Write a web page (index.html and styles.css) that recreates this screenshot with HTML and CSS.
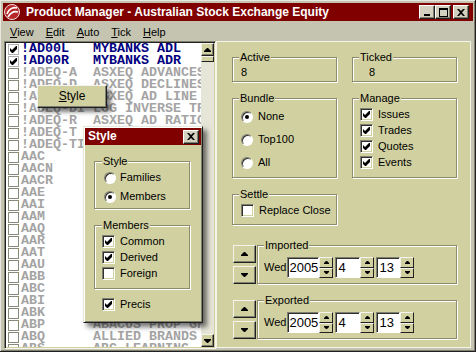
FILE: index.html
```html
<!DOCTYPE html>
<html lang="en">
<head>
<meta charset="UTF-8">
<title>Product Manager</title>
<link rel="stylesheet" href="styles.css">
</head>
<body>
<div class="window">
    <div class="titlebar">
        <svg class="app-icon" width="16" height="16" viewBox="0 0 16 16">
            <circle cx="8" cy="8" r="7.5" fill="#b82828" stroke="#f0e0e0"/>
            <path d="M3 10 C5 4, 10 3, 13 4" fill="none" stroke="#fff" stroke-width="1.6"/>
            <path d="M4 13 C7 8, 11 7, 14 8" fill="none" stroke="#fff" stroke-width="1.6"/>
        </svg>
        <span class="title">Product Manager - Australian Stock Exchange Equity</span>
        <div class="caption-buttons">
            <span class="cap-btn"><svg width="8" height="8" viewBox="0 0 8 8"><rect x="1" y="6" width="6" height="2"/></svg></span>
            <span class="cap-btn"><svg width="9" height="9" viewBox="0 0 9 9"><path d="M0 0h9v9H0z M1 2v6h7V2z" fill-rule="evenodd"/></svg></span>
            <span class="cap-btn close"><svg width="8" height="7" viewBox="0 0 8 7"><path d="M0 0h2l2 2 2-2h2L5 3.5 8 7H6L4 5 2 7H0l3-3.5z"/></svg></span>
        </div>
    </div>

    <div class="menubar">
        <span class="menu-item"><u>V</u>iew</span>
        <span class="menu-item"><u>E</u>dit</span>
        <span class="menu-item"><u>A</u>uto</span>
        <span class="menu-item"><u>T</u>ick</span>
        <span class="menu-item"><u>H</u>elp</span>
    </div>

    <div class="client">
        <div class="listbox">
            <div class="rows">
                <div class="row on"><span class="tick"><svg width="7" height="7" viewBox="0 0 7 7"><polygon points="0,2 2,4 6,0 7,0 7,3 3,7 2,7 0,5"/></svg></span><span class="code">!AD00L</span><span class="name">MYBANKS ADL</span></div>
                <div class="row on"><span class="tick"><svg width="7" height="7" viewBox="0 0 7 7"><polygon points="0,2 2,4 6,0 7,0 7,3 3,7 2,7 0,5"/></svg></span><span class="code">!AD00R</span><span class="name">MYBANKS ADR</span></div>
                <div class="row"><span class="tick"></span><span class="code">!ADEQ-A</span><span class="name">ASXEQ ADVANCES</span></div>
                <div class="row"><span class="tick"></span><span class="code">!ADEQ-D</span><span class="name">ASXEQ DECLINES</span></div>
                <div class="row"><span class="tick"></span><span class="code">!ADEQ-L</span><span class="name">ASXEQ AD LINE</span></div>
                <div class="row"><span class="tick"></span><span class="code">!ADEQ-DI</span><span class="name">LOG INVERSE TR</span></div>
                <div class="row"><span class="tick"></span><span class="code">!ADEQ-R</span><span class="name">ASXEQ AD RATIO</span></div>
                <div class="row"><span class="tick"></span><span class="code">!ADEQ-T</span><span class="name">ASXEQ TRIN</span></div>
                <div class="row"><span class="tick"></span><span class="code">!ADEQ-TI</span><span class="name">ASXEQ TRIN INV</span></div>
                <div class="row"><span class="tick"></span><span class="code">AAC</span><span class="name">AUST AGRICULT</span></div>
                <div class="row"><span class="tick"></span><span class="code">AACN</span><span class="name">AUST AGRIC NEW</span></div>
                <div class="row"><span class="tick"></span><span class="code">AACR</span><span class="name">AUST AGRIC RTS</span></div>
                <div class="row"><span class="tick"></span><span class="code">AAE</span><span class="name">AGRI ENERGY</span></div>
                <div class="row"><span class="tick"></span><span class="code">AAI</span><span class="name">ALCOA INC</span></div>
                <div class="row"><span class="tick"></span><span class="code">AAM</span><span class="name">AUST ALLIANCE</span></div>
                <div class="row"><span class="tick"></span><span class="code">AAQ</span><span class="name">AQUACARB CORP</span></div>
                <div class="row"><span class="tick"></span><span class="code">AAR</span><span class="name">ANGLO AUST RES</span></div>
                <div class="row"><span class="tick"></span><span class="code">AAT</span><span class="name">ASIA ATLANTIC</span></div>
                <div class="row"><span class="tick"></span><span class="code">AAU</span><span class="name">AUST AUSTRAL</span></div>
                <div class="row"><span class="tick"></span><span class="code">ABB</span><span class="name">ABB GRAIN</span></div>
                <div class="row"><span class="tick"></span><span class="code">ABC</span><span class="name">ADEL BRIGHTON</span></div>
                <div class="row"><span class="tick"></span><span class="code">ABI</span><span class="name">ABIGROUP</span></div>
                <div class="row"><span class="tick"></span><span class="code">ABK</span><span class="name">ABACUS FUNDS</span></div>
                <div class="row"><span class="tick"></span><span class="code">ABP</span><span class="name">ABACUS PROP GR</span></div>
                <div class="row"><span class="tick"></span><span class="code">ABQ</span><span class="name">ALLIED BRANDS</span></div>
                <div class="row"><span class="tick"></span><span class="code">ABS</span><span class="name">ABC LEARNING</span></div>
            </div>
            <div class="vscroll">
                <span class="sb-btn"><svg width="7" height="4" viewBox="0 0 7 4"><polygon points="3,0 4,0 7,3 7,4 0,4 0,3"/></svg></span>
                <span class="sb-thumb"></span>
                <span class="sb-track"></span>
                <span class="sb-btn"><svg width="7" height="4" viewBox="0 0 7 4"><polygon points="0,0 7,0 7,1 4,4 3,4 0,1"/></svg></span>
            </div>
        </div>

        <div class="panel">
            <div class="groups">
                <fieldset class="group">
                    <legend>Active</legend>
                    <div class="value">8</div>
                </fieldset>
                <fieldset class="group">
                    <legend>Ticked</legend>
                    <div class="value indent">8</div>
                </fieldset>
                <fieldset class="group">
                    <legend>Bundle</legend>
                    <label class="opt radio-row"><span class="radio checked"></span>None</label>
                    <label class="opt radio-row"><span class="radio"></span>Top100</label>
                    <label class="opt radio-row"><span class="radio"></span>All</label>
                </fieldset>
                <fieldset class="group manage">
                    <legend>Manage</legend>
                    <label class="opt check-row"><span class="check"><svg width="7" height="7" viewBox="0 0 7 7"><polygon points="0,2 2,4 6,0 7,0 7,3 3,7 2,7 0,5"/></svg></span>Issues</label>
                    <label class="opt check-row"><span class="check"><svg width="7" height="7" viewBox="0 0 7 7"><polygon points="0,2 2,4 6,0 7,0 7,3 3,7 2,7 0,5"/></svg></span>Trades</label>
                    <label class="opt check-row"><span class="check"><svg width="7" height="7" viewBox="0 0 7 7"><polygon points="0,2 2,4 6,0 7,0 7,3 3,7 2,7 0,5"/></svg></span>Quotes</label>
                    <label class="opt check-row"><span class="check"><svg width="7" height="7" viewBox="0 0 7 7"><polygon points="0,2 2,4 6,0 7,0 7,3 3,7 2,7 0,5"/></svg></span>Events</label>
                </fieldset>
                <fieldset class="group settle">
                    <legend>Settle</legend>
                    <label class="opt"><span class="check"></span>Replace Close</label>
                </fieldset>
            </div>

            <div class="date-row first">
                <div class="big-spin">
                    <span class="big-btn"><svg width="7" height="4" viewBox="0 0 7 4"><polygon points="3,0 4,0 7,3 7,4 0,4 0,3"/></svg></span>
                    <span class="big-btn"><svg width="7" height="4" viewBox="0 0 7 4"><polygon points="0,0 7,0 7,1 4,4 3,4 0,1"/></svg></span>
                </div>
                <fieldset class="group date">
                    <legend>Imported</legend>
                    <div class="date-fields">
                        <span class="dow">Wed</span>
                        <span class="edit year">2005</span>
                        <span class="spin"><span class="spin-btn"><svg width="5" height="3" viewBox="0 0 5 3"><polygon points="2,0 3,0 5,2 5,3 0,3 0,2"/></svg></span><span class="spin-btn"><svg width="5" height="3" viewBox="0 0 5 3"><polygon points="0,0 5,0 5,1 3,3 2,3 0,1"/></svg></span></span>
                        <span class="edit month">4</span>
                        <span class="spin"><span class="spin-btn"><svg width="5" height="3" viewBox="0 0 5 3"><polygon points="2,0 3,0 5,2 5,3 0,3 0,2"/></svg></span><span class="spin-btn"><svg width="5" height="3" viewBox="0 0 5 3"><polygon points="0,0 5,0 5,1 3,3 2,3 0,1"/></svg></span></span>
                        <span class="edit day">13</span>
                        <span class="spin"><span class="spin-btn"><svg width="5" height="3" viewBox="0 0 5 3"><polygon points="2,0 3,0 5,2 5,3 0,3 0,2"/></svg></span><span class="spin-btn"><svg width="5" height="3" viewBox="0 0 5 3"><polygon points="0,0 5,0 5,1 3,3 2,3 0,1"/></svg></span></span>
                    </div>
                </fieldset>
            </div>

            <div class="date-row">
                <div class="big-spin">
                    <span class="big-btn"><svg width="7" height="4" viewBox="0 0 7 4"><polygon points="3,0 4,0 7,3 7,4 0,4 0,3"/></svg></span>
                    <span class="big-btn"><svg width="7" height="4" viewBox="0 0 7 4"><polygon points="0,0 7,0 7,1 4,4 3,4 0,1"/></svg></span>
                </div>
                <fieldset class="group date">
                    <legend>Exported</legend>
                    <div class="date-fields">
                        <span class="dow">Wed</span>
                        <span class="edit year">2005</span>
                        <span class="spin"><span class="spin-btn"><svg width="5" height="3" viewBox="0 0 5 3"><polygon points="2,0 3,0 5,2 5,3 0,3 0,2"/></svg></span><span class="spin-btn"><svg width="5" height="3" viewBox="0 0 5 3"><polygon points="0,0 5,0 5,1 3,3 2,3 0,1"/></svg></span></span>
                        <span class="edit month">4</span>
                        <span class="spin"><span class="spin-btn"><svg width="5" height="3" viewBox="0 0 5 3"><polygon points="2,0 3,0 5,2 5,3 0,3 0,2"/></svg></span><span class="spin-btn"><svg width="5" height="3" viewBox="0 0 5 3"><polygon points="0,0 5,0 5,1 3,3 2,3 0,1"/></svg></span></span>
                        <span class="edit day">13</span>
                        <span class="spin"><span class="spin-btn"><svg width="5" height="3" viewBox="0 0 5 3"><polygon points="2,0 3,0 5,2 5,3 0,3 0,2"/></svg></span><span class="spin-btn"><svg width="5" height="3" viewBox="0 0 5 3"><polygon points="0,0 5,0 5,1 3,3 2,3 0,1"/></svg></span></span>
                    </div>
                </fieldset>
            </div>
        </div>
    </div>

    <!-- context menu over the list -->
    <div class="popup-menu"><span><u>S</u>tyle</span></div>

    <!-- Style tool window -->
    <div class="dialog">
        <div class="dlg-title">
            <span>Style</span>
            <span class="cap-btn close"><svg width="8" height="7" viewBox="0 0 8 7"><path d="M0 0h2l2 2 2-2h2L5 3.5 8 7H6L4 5 2 7H0l3-3.5z"/></svg></span>
        </div>
        <div class="dlg-body">
            <fieldset class="group style-group">
                <legend>Style</legend>
                <label class="opt dlg-radio"><span class="radio"></span>Families</label>
                <label class="opt dlg-radio"><span class="radio checked"></span>Members</label>
            </fieldset>
            <fieldset class="group members-group">
                <legend>Members</legend>
                <label class="opt check-row"><span class="check"><svg width="7" height="7" viewBox="0 0 7 7"><polygon points="0,2 2,4 6,0 7,0 7,3 3,7 2,7 0,5"/></svg></span>Common</label>
                <label class="opt check-row"><span class="check"><svg width="7" height="7" viewBox="0 0 7 7"><polygon points="0,2 2,4 6,0 7,0 7,3 3,7 2,7 0,5"/></svg></span>Derived</label>
                <label class="opt check-row"><span class="check"></span>Foreign</label>
            </fieldset>
            <label class="opt precis"><span class="check"><svg width="7" height="7" viewBox="0 0 7 7"><polygon points="0,2 2,4 6,0 7,0 7,3 3,7 2,7 0,5"/></svg></span>Precis</label>
        </div>
    </div>
</div>
</body>
</html>
```

FILE: styles.css
```css
body {
    margin: 0;
    background-color: #c4c4b0;
    font-family: "Liberation Sans", Arial, sans-serif;
    font-size: 11px;
    line-height: 13px;
    color: #000;
}

.window {
    position: relative;
    width: 476px;
    height: 352px;
    box-sizing: border-box;
    padding: 3px;
    background-color: #c4c4b0;
    box-shadow: inset -1px -1px #202020, inset 1px 1px #e8e8e0, inset -2px -2px #808070;
    display: flex;
    flex-direction: column;
    overflow: hidden;
}

/* title bar */
.titlebar {
    height: 18px;
    background-color: #800000;
    display: flex;
    align-items: center;
    padding: 0 4px 0 1px;
    flex-shrink: 0;
}

.app-icon {
    margin-right: 6px;
}

.title {
    color: #fff;
    font-weight: bold;
    font-size: 12px;
    white-space: nowrap;
}

.caption-buttons {
    margin-left: auto;
    display: flex;
}

.cap-btn {
    width: 16px;
    height: 14px;
    box-sizing: border-box;
    background-color: #d4d0c0;
    border: 1px solid;
    border-color: #fff #202020 #202020 #fff;
    box-shadow: inset -1px -1px #808070;
    display: flex;
    align-items: center;
    justify-content: center;
}

.cap-btn.close {
    margin-left: 2px;
}

/* menu bar */
.menubar {
    height: 20px;
    display: flex;
    align-items: center;
    padding: 2px 0 0 1px;
    box-sizing: border-box;
    flex-shrink: 0;
}

.menu-item {
    padding: 0 6px;
}

/* client area */
.client {
    flex: 1;
    display: flex;
    padding: 0 2px 0 1px;
    min-height: 0;
}

.listbox {
    width: 212px;
    box-sizing: border-box;
    background-color: #fff;
    border: 1px solid;
    border-color: #808070 #f4f4ec #f4f4ec #808070;
    box-shadow: inset 1px 1px #202020, inset -1px -1px #d0d0a0;
    padding: 1px;
    display: flex;
}

.rows {
    flex: 1;
    overflow: hidden;
    padding-left: 2px;
    font-family: "Liberation Mono", "Courier New", monospace;
    font-weight: bold;
    font-size: 13.33px;
    color: #a4a4a4;
}

.row {
    height: 12px;
    line-height: 12px;
    display: flex;
    align-items: center;
    white-space: nowrap;
}

.row.on {
    color: #000080;
}

.tick {
    width: 11px;
    height: 11px;
    box-sizing: border-box;
    border: 1px solid #8a8a7a;
    margin-right: 2px;
    flex-shrink: 0;
    display: flex;
    align-items: center;
    justify-content: center;
}

.row.on .tick {
    border-color: #b0b0b0;
}

.code {
    width: 72px;
    flex-shrink: 0;
}

.vscroll {
    width: 13px;
    display: flex;
    flex-direction: column;
    background-color: #e6e6d8;
}

.sb-btn {
    height: 13px;
    box-sizing: border-box;
    background-color: #d0d0a0;
    border: 1px solid;
    border-color: #f4f4ec #202020 #202020 #f4f4ec;
    box-shadow: inset -1px -1px #808070;
    display: flex;
    align-items: center;
    justify-content: center;
}

.sb-thumb {
    height: 6px;
    box-sizing: border-box;
    background-color: #d0d0a0;
    border: 1px solid;
    border-color: #f4f4ec #202020 #202020 #f4f4ec;
}

.sb-track {
    flex: 1;
}

/* right panel */
.panel {
    flex: 1;
    background-color: #d0d0a0;
    border: 1px solid #f4f4e8;
    margin-bottom: 1px;
    padding: 9px 0 0 15px;
}

.groups {
    display: grid;
    grid-template-columns: 105px 105px;
    column-gap: 15px;
    row-gap: 10px;
}

.group {
    margin: 0;
    min-width: 0;
    padding: 0 6px;
    border: 1px solid #8c8c6c;
    box-shadow: inset 1px 1px #fff, 1px 1px #fff;
}

.group legend {
    padding: 0 1px;
    background-color: #d0d0a0;
}

.value {
    padding: 2px 0 2px 2px;
}

.value.indent {
    padding-left: 10px;
}

.opt {
    display: flex;
    align-items: center;
    white-space: nowrap;
}

.radio-row {
    height: 23px;
    padding-left: 2px;
}

.radio-row:last-of-type {
    margin-bottom: 3px;
}

.manage {
    padding-top: 1px;
}

.check-row {
    height: 16px;
    padding-left: 1px;
}

.radio {
    width: 12px;
    height: 12px;
    box-sizing: border-box;
    border-radius: 50%;
    background-color: #fff;
    border: 1px solid;
    border-color: #808070 #fff #fff #808070;
    box-shadow: inset 1px 1px #303030;
    margin-right: 5px;
    display: flex;
    align-items: center;
    justify-content: center;
}

.radio.checked::after {
    content: "";
    width: 4px;
    height: 4px;
    border-radius: 50%;
    background-color: #000;
}

.check {
    width: 13px;
    height: 13px;
    box-sizing: border-box;
    background-color: #fff;
    border: 1px solid;
    border-color: #808070 #fff #fff #808070;
    box-shadow: inset 1px 1px #303030, inset -1px -1px #d0d0a0;
    margin-right: 5px;
    flex-shrink: 0;
    display: flex;
    align-items: center;
    justify-content: center;
}

.settle .opt {
    height: 13px;
    margin: 3px 0 7px 2px;
}

/* date rows */
.date-row {
    display: flex;
    align-items: flex-end;
    margin-top: 10px;
    padding-left: 1px;
}

.date-row.first {
    margin-top: 14px;
}

.big-spin {
    width: 23px;
    display: flex;
    flex-direction: column;
    gap: 3px;
}

.big-btn {
    height: 18px;
    box-sizing: border-box;
    background-color: #d0d0a0;
    border: 1px solid;
    border-color: #f4f4ec #202020 #202020 #f4f4ec;
    box-shadow: inset -1px -1px #808070;
    display: flex;
    align-items: center;
    justify-content: center;
}

.group.date {
    width: 200px;
    box-sizing: border-box;
    margin-left: 1px;
}

.date-fields {
    display: flex;
    align-items: center;
    padding: 5px 0;
}

.dow {
    margin-right: 1px;
}

.edit {
    height: 21px;
    box-sizing: border-box;
    background-color: #fff;
    border: 1px solid;
    border-color: #808070 #fff #fff #808070;
    box-shadow: inset 1px 1px #303030;
    font-size: 13px;
    line-height: 19px;
    padding-left: 2px;
    margin-left: 2px;
}

.edit.year {
    width: 32px;
    margin-left: 0;
    padding-left: 1px;
}

.edit.month {
    width: 25px;
}

.edit.day {
    width: 24px;
}

.spin {
    width: 14px;
    height: 21px;
    display: flex;
    flex-direction: column;
}

.spin-btn {
    flex: 1;
    box-sizing: border-box;
    background-color: #d0d0a0;
    border: 1px solid;
    border-color: #f4f4ec #202020 #202020 #f4f4ec;
    display: flex;
    align-items: center;
    justify-content: center;
}

/* popup menu */
.popup-menu {
    position: absolute;
    left: 37px;
    top: 85px;
    width: 70px;
    height: 23px;
    box-sizing: border-box;
    background-color: #d0d0a0;
    border: 1px solid;
    border-color: #f4f4ec #202020 #202020 #f4f4ec;
    box-shadow: inset -1px -1px #808070, 4px 4px 4px rgba(0, 0, 0, 0.5);
    display: flex;
    align-items: center;
    justify-content: center;
    font-size: 12px;
}

/* style dialog */
.dialog {
    position: absolute;
    left: 83px;
    top: 126px;
    width: 120px;
    height: 197px;
    box-sizing: border-box;
    background-color: #d0d0a0;
    border: 1px solid;
    border-color: #e8e8d8 #202020 #202020 #e8e8d8;
    padding: 1px;
    box-shadow: inset 1px 1px #fff, inset -1px -1px #808070, 4px 4px 5px rgba(0, 0, 0, 0.55);
}

.dlg-title {
    height: 17px;
    background-color: #800000;
    color: #fff;
    font-weight: bold;
    font-size: 12px;
    display: flex;
    align-items: center;
    justify-content: space-between;
    padding: 0 2px 0 3px;
}

.dlg-body {
    padding: 0 11px 0 9px;
}

.style-group {
    margin-top: 10px;
    padding: 0 6px 2px 7px;
}

.dlg-radio {
    height: 19px;
    padding-left: 2px;
}

.dlg-radio .radio {
    margin-right: 4px;
}

.members-group {
    margin-top: 10px;
    padding: 1px 6px 7px 7px;
}

.members-group .check-row {
    padding-left: 0;
}

.precis {
    height: 13px;
    margin: 9px 0 0 8px;
}
```
